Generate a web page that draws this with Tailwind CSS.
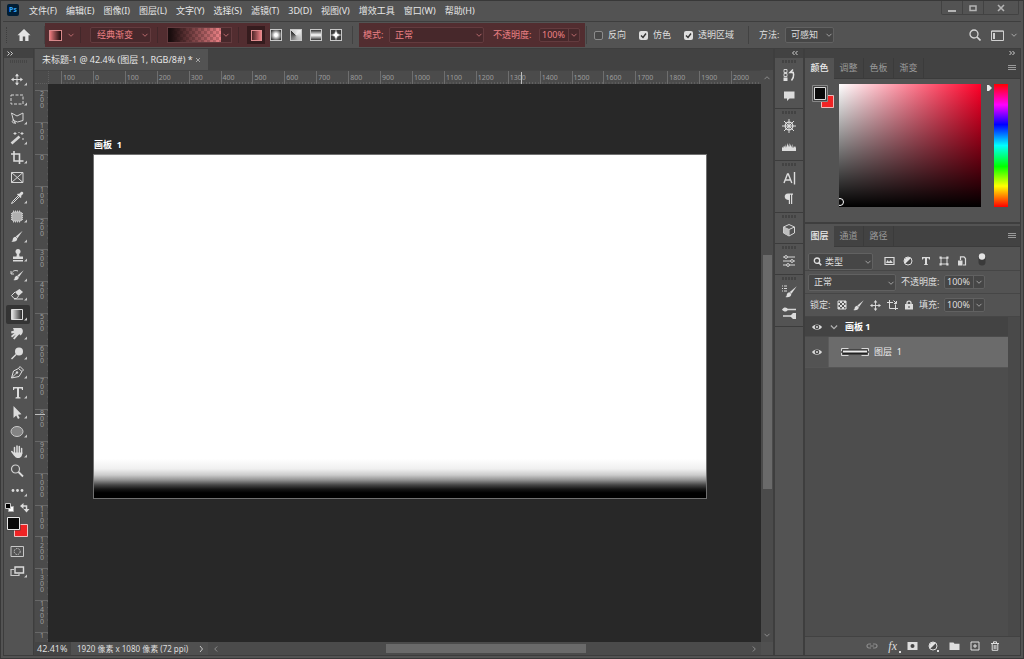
<!DOCTYPE html>
<html lang="zh-CN">
<head>
<meta charset="utf-8">
<title>未标题-1 @ 42.4%</title>
<script src="https://cdn.jsdelivr.net/npm/@tailwindcss/browser@4"></script>
</head>
<body class="bg-[#535353]">
<svg class="hidden">
  <symbol id="fly" viewBox="0 0 24 19"><path d="M21 12.500v3h-3z" fill="#c8c8c8"/></symbol>
  <symbol id="chev" viewBox="0 0 8 8"><path d="M1.500 2.800 4 5.300 6.500 2.800" fill="none" stroke="currentColor"/></symbol>
  <symbol id="eye" viewBox="0 0 12 10"><path d="M1 5C3 1.500 9 1.500 11 5 9 8.500 3 8.500 1 5z" fill="#dcdcdc"/><circle cx="6" cy="5" r="2.300" fill="#484848"/><circle cx="6" cy="5" r="1" fill="#dcdcdc"/></symbol>
  <symbol id="brush" viewBox="0 0 12 12"><path d="M11.700.3 4.800 6 6.500 7.700z" fill="#dcdcdc"/><path d="M4.500 6.200 6.300 8c0 2.700-2.800 3.700-6 3 1.700-.8 1.300-1.500 1.500-2.500s1.300-2.300 2.700-2.300z" fill="#dcdcdc"/></symbol>
  <symbol id="move" viewBox="0 0 12 12"><path d="M6 1v10M1 6h10" stroke="#dcdcdc" fill="none"/><path d="M6 0 8 2.700H4zM6 12l2-2.700H4zM0 6l2.700-2v4zM12 6 9.300 4v4z" fill="#dcdcdc"/></symbol>
  <symbol id="adj" viewBox="0 0 10 10"><circle cx="5" cy="5" r="4" fill="#4a4a4a" stroke="#dcdcdc"/><path d="M2.200 7.800A4 4 0 0 1 7.800 2.200z" fill="#e2e2e2"/></symbol>
</svg>
<div class="flex h-screen flex-col overflow-hidden border border-[#383838] bg-[#535353] px-[2px] pb-[2px] font-['Noto_Sans','Noto_Sans_CJK_SC',sans-serif] text-[9px] leading-3 text-[#dedede]">

  <!-- menu bar -->
  <header class="flex h-[21px] shrink-0 items-start border-b border-[#3e3e3e]">
    <div class="mt-[3px] ml-1 flex h-3 w-3 items-center justify-center rounded-xs bg-[#001e36] text-[7px] font-bold text-[#31a8ff]">Ps</div>
    <nav class="mt-1 ml-[10px] flex flex-1 gap-[9px] text-[#e6e6e6]">
      <button>文件(F)</button><button>编辑(E)</button><button>图像(I)</button><button>图层(L)</button><button>文字(Y)</button><button>选择(S)</button><button>滤镜(T)</button><button>3D(D)</button><button>视图(V)</button><button>增效工具</button><button>窗口(W)</button><button>帮助(H)</button>
    </nav>
    <div class="mr-[2px] flex h-[14px] divide-x divide-[#424242] rounded-b-xs border-x border-b border-[#424242]">
      <button aria-label="最小化" class="flex w-[21px] items-center justify-center"><svg class="h-3 w-3" viewBox="0 0 12 12"><path d="M2 9h8" stroke="#b4b4b4" stroke-width="2"/></svg></button>
      <button aria-label="最大化" class="flex w-[21px] items-center justify-center"><svg class="h-3 w-3" viewBox="0 0 12 12"><path d="M3 4h6v4.500H3z" fill="none" stroke="#b4b4b4" stroke-width="1.500"/></svg></button>
      <button aria-label="关闭" class="flex w-[34px] items-center justify-center"><svg class="h-3 w-3" viewBox="0 0 12 12"><path d="m3 3 6 6M9 3 3 9" stroke="#b4b4b4" stroke-width="1.600"/></svg></button>
    </div>
  </header>

  <!-- options bar -->
  <section class="flex h-[27px] shrink-0 items-center border-b border-[#3e3e3e] pl-[3px]">
    <div class="h-4 w-1 border-l border-dotted border-[#3e3e3e]"></div>
    <button aria-label="主页" class="ml-[6px]"><svg class="h-4 w-4" viewBox="0 0 16 16"><path d="M8 2 1.500 8.200H3.500V14h3.300V9.500h2.400V14h3.300V8.200h2z" fill="#e4e4e4"/></svg></button>
    <div class="ml-3 h-[18px] w-px bg-[#464646]"></div>
    <div class="flex h-6 w-[225px] shrink-0 items-center bg-[#522d30] text-[#ec8084]">
      <button aria-label="渐变工具预设" class="ml-1 flex items-center gap-[5px]"><span class="h-[11px] w-[13px] border border-[#d8898b] bg-linear-to-r from-[#ea7a7d] to-[#1c0c0d]"></span><svg class="h-2 w-2 text-[#b8686b]"><use href="#chev"/></svg></button>
      <div class="ml-[5px] h-4 w-px bg-[#42272a]"></div>
      <div class="relative ml-[9px] w-[61px]">
        <select aria-label="渐变类型" class="block h-4 w-full appearance-none rounded-xs border border-[#633b3e] bg-[#47282b] pl-[6px] leading-3 outline-none"><option>经典渐变</option></select>
        <svg class="pointer-events-none absolute top-1 right-[2px] h-2 w-2 text-[#b8686b]"><use href="#chev"/></svg>
      </div>
      <div class="ml-[6px] h-4 w-px bg-[#42272a]"></div>
      <button aria-label="编辑渐变" class="ml-[9px] flex h-4 w-[65px] items-center border border-[#633b3e] bg-[#47282b]"><span class="h-[14px] flex-1 bg-[linear-gradient(to_right,#1a0d0e_5%,#1a0d0e00),repeating-conic-gradient(#c66c70_0_25%,#ef8387_0_50%)] bg-[length:100%_100%,6px_6px]"></span><svg class="mx-px h-2 w-2 text-[#b8686b]"><use href="#chev"/></svg></button>
      <div class="ml-[6px] h-4 w-px bg-[#42272a]"></div>
      <button aria-label="线性渐变" class="ml-2 flex h-[18px] w-[18px] items-center justify-center bg-[#351c1e]"><span class="h-[11px] w-[11px] border border-[#e08c8f] bg-linear-to-r from-[#4c2527] to-[#f08085]"></span></button>
    </div>
    <div class="flex shrink-0 gap-2">
      <button aria-label="径向渐变" class="h-[12px] w-[12px] border border-[#c8c8c8] bg-[radial-gradient(circle,#ffffff_20%,#3c3c3c_85%)]"></button>
      <button aria-label="角度渐变" class="h-[12px] w-[12px] border border-[#c8c8c8] bg-[conic-gradient(from_310deg,#cccccc,#ededed_25%,#b4b4b4_60%,#333333)]"></button>
      <button aria-label="对称渐变" class="h-[12px] w-[12px] border border-[#c8c8c8] bg-[linear-gradient(to_bottom,#333333,#ffffff_50%,#333333)]"></button>
      <button aria-label="菱形渐变" class="flex h-[12px] w-[12px] items-center justify-center border border-[#c8c8c8] bg-[#3c3c3c]"><svg class="h-[10px] w-[10px]" viewBox="0 0 10 10"><path d="M5 0 6.500 3.500 10 5 6.500 6.500 5 10 3.500 6.500 0 5 3.500 3.500z" fill="#fff" stroke="#8a8a8a" stroke-width=".7"/></svg></button>
    </div>
    <div class="ml-[10px] h-[18px] w-px bg-[#424242]"></div>
    <div class="ml-[6px] flex h-6 w-[226px] shrink-0 items-center bg-[#522d30] text-[#ec8084]">
      <label for="mode" class="ml-1 w-[26px]">模式:</label>
      <div class="relative w-[95px]">
        <select id="mode" class="block h-4 w-full appearance-none rounded-xs border border-[#633b3e] bg-[#47282b] pl-[5px] leading-3 outline-none"><option>正常</option></select>
        <svg class="pointer-events-none absolute top-1 right-px h-2 w-2 text-[#b8686b]"><use href="#chev"/></svg>
      </div>
      <label for="op1" class="ml-[9px] w-[46px] whitespace-nowrap">不透明度:</label>
      <div class="flex h-[14px] items-center rounded-xs border border-[#633b3e] bg-[#47282b]"><input id="op1" value="100%" class="h-3 w-7 pl-[2px] outline-none"><button aria-label="不透明度滑块" class="flex h-3 w-[11px] items-center justify-center border-l border-[#633b3e] text-[#b8686b]"><svg class="h-2 w-2"><use href="#chev"/></svg></button></div>
    </div>
    <div class="ml-px h-[18px] w-px bg-[#424242]"></div>
    <label class="ml-[7px] flex items-center gap-[5px] whitespace-nowrap"><input type="checkbox" class="h-[9px] w-[9px] appearance-none rounded-xs border border-[#8b8b8b] bg-[#484848]">反向</label>
    <label class="ml-[13px] flex items-center gap-[5px] whitespace-nowrap"><span class="relative flex"><input type="checkbox" checked class="h-[9px] w-[9px] appearance-none rounded-xs bg-[#dedede]"><svg class="pointer-events-none absolute inset-0 h-[9px] w-[9px]" viewBox="0 0 9 9"><path d="m2 4.500 2 2L7 2.500" fill="none" stroke="#333" stroke-width="1.400"/></svg></span>仿色</label>
    <label class="ml-[13px] flex items-center gap-[5px] whitespace-nowrap"><span class="relative flex"><input type="checkbox" checked class="h-[9px] w-[9px] appearance-none rounded-xs bg-[#dedede]"><svg class="pointer-events-none absolute inset-0 h-[9px] w-[9px]" viewBox="0 0 9 9"><path d="m2 4.500 2 2L7 2.500" fill="none" stroke="#333" stroke-width="1.400"/></svg></span>透明区域</label>
    <div class="ml-[14px] h-[18px] w-px bg-[#424242]"></div>
    <label for="method" class="ml-[10px] w-[26px] whitespace-nowrap">方法:</label>
    <div class="relative w-[49px]">
      <select id="method" class="block h-4 w-full appearance-none rounded-xs border border-[#616161] bg-[#464646] pl-[5px] leading-3 outline-none"><option>可感知</option></select>
      <svg class="pointer-events-none absolute top-1 right-px h-2 w-2 text-[#a0a0a0]"><use href="#chev"/></svg>
    </div>
    <div class="flex-1"></div>
    <button aria-label="搜索"><svg class="h-3 w-3" viewBox="0 0 12 12"><circle cx="5" cy="5" r="4" fill="none" stroke="#d6d6d6" stroke-width="1.300"/><path d="m8 8 3.500 3.500" stroke="#d6d6d6" stroke-width="1.700"/></svg></button>
    <button aria-label="工作区" class="mr-[3px] ml-[10px] flex items-center gap-[6px]"><svg class="h-[11px] w-[13px]" viewBox="0 0 13 11"><path d="M.5 1h12v9.500H.5z" fill="none" stroke="#d0d0d0"/><path d="M.5 1.200h12" stroke="#d0d0d0"/><path d="M2 3h2v6H2z" fill="#d0d0d0"/></svg><svg class="h-2 w-2 text-[#a8a8a8]"><use href="#chev"/></svg></button>
  </section>

  <div class="flex min-h-0 flex-1 border-x border-b border-[#3c3c3c]">

    <!-- tools -->
    <aside class="flex w-[30px] shrink-0 flex-col border-r border-[#3e3e3e]">
      <div class="h-[9px] bg-[#424242]"><svg class="ml-[2px] h-2 w-2" viewBox="0 0 8 8"><path d="m1.500 2.500 2 2-2 2M4.500 2.500l2 2-2 2" fill="none" stroke="#d0d0d0"/></svg></div>
      <div class="mx-[6px] mt-[2px] h-[3px] bg-[repeating-linear-gradient(to_right,#464646_0_1px,transparent_1px_2px)]"></div>
      <div class="mt-[7px] ml-[2px] grid h-[430px] w-6 shrink-0 grid-rows-22">
        <button aria-label="移动工具"><svg class="h-[19px] w-6" viewBox="0 0 24 19"><use href="#move" x="5" y="3.500" width="12" height="12"/><use href="#fly"/></svg></button>
        <button aria-label="矩形选框工具"><svg class="h-[19px] w-6" viewBox="0 0 24 19"><path d="M5 5h12v9H5z" fill="none" stroke="#d6d6d6" stroke-dasharray="3 1.500"/><use href="#fly"/></svg></button>
        <button aria-label="套索工具"><svg class="h-[19px] w-6" viewBox="0 0 24 19"><path d="m5.500 4 5.500 3 6-3v7.500l-5.500 1.500-4-1.500L5.500 4M7.500 11.500c-2 0-1.500 2.500.5 2.500l1.500-.5M7 10l2.500 5" fill="none" stroke="#d6d6d6"/><use href="#fly"/></svg></button>
        <button aria-label="魔棒工具"><svg class="h-[19px] w-6" viewBox="0 0 24 19"><path d="m5.500 14.500 8-7" stroke="#d6d6d6" stroke-width="2.600"/><path d="M9 3v3M7.500 4.500h3M16 3v3M14.500 4.500h3M17 9v2M13 3v1" stroke="#d6d6d6"/><use href="#fly"/></svg></button>
        <button aria-label="裁剪工具"><svg class="h-[19px] w-6" viewBox="0 0 24 19"><path d="M8 3v10h7M5 6h8.500v3M13.500 9v7M15 13h2.500" fill="none" stroke="#dcdcdc" stroke-width="1.600"/><use href="#fly"/></svg></button>
        <button aria-label="图框工具"><svg class="h-[19px] w-6" viewBox="0 0 24 19"><path d="M5.500 4.500h11.500v10H5.500zM5.500 4.500l11.500 10M17 4.500l-11.500 10" fill="none" stroke="#d6d6d6"/></svg></button>
        <button aria-label="吸管工具"><svg class="h-[19px] w-6" viewBox="0 0 24 19"><path d="m12.500 7.500-6 6-1 2 2-1 6-6" fill="none" stroke="#dcdcdc"/><path d="m11 6.500 1-1 1 .5 2-2c1.500-1 3 .5 2 2l-2 2 .5 1-1 1z" fill="#dcdcdc"/><use href="#fly"/></svg></button>
        <button aria-label="修补工具"><svg class="h-[19px] w-6" viewBox="0 0 24 19"><path d="M7.500 3.500v12M9.500 3.500v12M11.500 3.500v12M13.500 3.500v12M5 6.500h12M5 8.500h12M5 10.500h12M5 12.500h12" stroke="#c8c8c8"/><rect x="6" y="5" width="10" height="9" rx="2" fill="#b0b0b0" stroke="#cfcfcf" stroke-width=".8"/><use href="#fly"/></svg></button>
        <button aria-label="画笔工具"><svg class="h-[19px] w-6" viewBox="0 0 24 19"><use href="#brush" x="5" y="3.500" width="12" height="12"/><use href="#fly"/></svg></button>
        <button aria-label="图章工具"><svg class="h-[19px] w-6" viewBox="0 0 24 19"><circle cx="12" cy="5.500" r="2.500" fill="#dcdcdc"/><path d="M11 7h2l.5 3.500H17V13H7v-2.500h3.500zM7 14h10v1.500H7z" fill="#dcdcdc"/><use href="#fly"/></svg></button>
        <button aria-label="历史记录画笔"><svg class="h-[19px] w-6" viewBox="0 0 24 19"><use href="#brush" x="7" y="3.500" width="11" height="12"/><path d="M5 5v3h3M5.500 7.500C7 4.500 9 4 12 5" fill="none" stroke="#d6d6d6"/><use href="#fly"/></svg></button>
        <button aria-label="橡皮擦工具"><svg class="h-[19px] w-6" viewBox="0 0 24 19"><path d="m9 7 4.500-3L17 7l-4.500 4z" fill="#dcdcdc"/><path d="m9 7-3.500 3.500 2.500 3h2.500l2-2.500M8 14h9" fill="none" stroke="#dcdcdc"/><use href="#fly"/></svg></button>
        <button aria-label="渐变工具" aria-pressed="true" class="rounded-xs bg-[#343434]"><svg class="h-[19px] w-6" viewBox="0 0 24 19"><defs><linearGradient id="gr"><stop stop-color="#eee"/><stop offset="1" stop-color="#222"/></linearGradient></defs><path d="M5.500 4.500h11v10h-11z" fill="url(#gr)" stroke="#dcdcdc"/><use href="#fly"/></svg></button>
        <button aria-label="涂抹工具"><svg class="h-[19px] w-6" viewBox="0 0 24 19"><path d="M7 4h8c2.500 1 2.500 5 0 7l-1 .5-.5-1.500-2 2-3 3.500-1.500-1 3-4-4 3-1-1.500 3.500-3-3 .5-.5-2 3-1z" fill="#dcdcdc"/><use href="#fly"/></svg></button>
        <button aria-label="减淡工具"><svg class="h-[19px] w-6" viewBox="0 0 24 19"><circle cx="13" cy="7.500" r="4" fill="#dcdcdc"/><path d="m10 10.500-4.500 4.500" stroke="#dcdcdc" stroke-width="1.500"/><use href="#fly"/></svg></button>
        <button aria-label="钢笔工具"><svg class="h-[19px] w-6" viewBox="0 0 24 19"><path d="m5.500 15 2-7 5-2.500 3.500 3-3 5zM5.500 15l5-5M12.500 5.500l1.500-2 3.500 3.500-1.500 1.500" fill="none" stroke="#dcdcdc"/><circle cx="11" cy="9.500" r="1.200" fill="#dcdcdc"/><use href="#fly"/></svg></button>
        <button aria-label="文字工具"><svg class="h-[19px] w-6" viewBox="0 0 24 19"><path d="M7 4h10v3h-1l-.5-1.500H13V14l1.500.5v1h-5v-1L11 14V5.500H8.500L8 7H7z" fill="#dcdcdc"/><use href="#fly"/></svg></button>
        <button aria-label="路径选择工具"><svg class="h-[19px] w-6" viewBox="0 0 24 19"><path d="M7.500 3v12l2.700-2.500 1.800 3.500 1.700-1-1.700-3.300 3.500-.5z" fill="#dcdcdc"/><use href="#fly"/></svg></button>
        <button aria-label="椭圆工具"><svg class="h-[19px] w-6" viewBox="0 0 24 19"><ellipse cx="11" cy="9.500" rx="6" ry="5" fill="#838383" stroke="#c8c8c8"/><use href="#fly"/></svg></button>
        <button aria-label="抓手工具"><svg class="h-[19px] w-6" viewBox="0 0 24 19"><path d="M8.500 12V5.500M11 11V4M13.300 11V4.500M15.600 11.500V6.500M5.800 9.500l2.700 3.500" stroke="#dcdcdc" stroke-width="1.500" stroke-linecap="round"/><path d="M7.800 10.500h8.500c0 3-1 5.500-4 5.500s-3.500-1.500-4.500-3z" fill="#dcdcdc"/><use href="#fly"/></svg></button>
        <button aria-label="缩放工具"><svg class="h-[19px] w-6" viewBox="0 0 24 19"><circle cx="9.500" cy="8" r="4" fill="none" stroke="#d0d0d0" stroke-width="1.200"/><path d="m12.500 11 4.500 4.500" stroke="#dcdcdc" stroke-width="1.800"/></svg></button>
        <button aria-label="编辑工具栏"><svg class="h-[19px] w-6" viewBox="0 0 24 19"><g fill="#dcdcdc"><circle cx="7" cy="9.500" r="1.400"/><circle cx="11.500" cy="9.500" r="1.400"/><circle cx="16" cy="9.500" r="1.400"/></g><use href="#fly"/></svg></button>
      </div>
      <svg class="mt-[2px] h-[38px] w-7 shrink-0" viewBox="0 0 28 38"><path d="M4.500 4.500h5v5h-5z" fill="#fff" stroke="#aaa"/><path d="M1.500 1.500h5v5h-5z" fill="#000" stroke="#c8c8c8"/><path d="M18.500 4h4v4" fill="none" stroke="#dcdcdc" stroke-width="1.500"/><path d="m16 4 3.500-3v6zM22.500 10.500l-3-3.500h6z" fill="#dcdcdc"/><path d="M10.500 22.500h13v12h-13z" fill="#f12324" stroke="#f0c0c0"/><path d="M2.500 14.500h14v14h-14z" fill="#444"/><path d="M3.500 15.500h12v12h-12z" fill="#090909" stroke="#e8e8e8"/></svg>
      <button aria-label="快速蒙版" class="mt-px ml-[2px] h-5 w-6"><svg class="h-[19px] w-6" viewBox="0 0 24 19"><path d="M5 4.500h12.500v10H5z" fill="none" stroke="#c8c8c8"/><circle cx="11.200" cy="9.500" r="3" fill="none" stroke="#c8c8c8" stroke-dasharray="1.500 1"/></svg></button>
      <button aria-label="屏幕模式" class="ml-[2px] h-5 w-6"><svg class="h-[19px] w-6" viewBox="0 0 24 19"><path d="M9 5h8.500v6H9z" fill="none" stroke="#dcdcdc" stroke-width="1.400"/><path d="M8 7.500H5v6h8V12" fill="none" stroke="#c8c8c8" stroke-width="1.200"/><use href="#fly"/></svg></button>
    </aside>

    <!-- document -->
    <main class="flex min-w-0 flex-1 flex-col border-l border-[#454545] bg-[#424242]">
      <div class="flex h-[21px] shrink-0">
        <div class="flex w-[173px] items-center justify-between bg-[#535353] pr-[6px] pl-[7px] whitespace-nowrap text-[#e6e6e6]"><a href="#canvas">未标题-1 @ 42.4% (图层 1, RGB/8#) *</a><button aria-label="关闭文档"><svg class="h-2 w-2" viewBox="0 0 8 8"><path d="m2 2 4 4M6 2 2 6" stroke="#b0b0b0" stroke-width=".9"/></svg></button></div>
      </div>
      <div class="flex min-h-0 flex-1">
        <div class="flex min-w-0 flex-1 flex-col">
          <div class="flex h-[14px] shrink-0 overflow-hidden border-t border-[#454545] bg-[#4b4b4b]">
            <div class="w-[14px] shrink-0 border-r border-b border-dotted border-[#5e5e5e]"></div>
            <div class="relative ml-[12px] min-w-0 flex-1">
              <div id="hr" class="-mr-[2px] grid h-full grid-cols-22"></div>
              <div class="absolute bottom-0 left-[460px] h-3 w-px bg-[#bdbdbd]"></div>
            </div>
          </div>
          <div class="flex min-h-0 flex-1">
            <div class="relative w-[13px] shrink-0 overflow-hidden bg-[#4b4b4b] pt-[6px]">
              <div id="vr" class="grid h-[574px] grid-rows-18"></div>
              <div class="absolute top-[330px] left-0 h-px w-[10px] bg-[#bdbdbd]"></div>
            </div>
            <div id="canvas" class="min-w-0 flex-1 overflow-hidden bg-[#282828] pr-[54px] pl-[45px]">
              <div class="mt-[55px] h-[15px] pl-px leading-3 font-bold text-white">画板&nbsp; 1</div>
              <div class="aspect-video border border-[#707070] bg-[linear-gradient(to_bottom,#fff_88.5%,#f0f0f0_91.5%,#cbcbcb_93.3%,#909090_94.8%,#454545_96.2%,#161616_97.4%,#000_98.5%)]"></div>
            </div>
          </div>
        </div>
        <div class="flex w-3 shrink-0 flex-col items-center bg-[#4b4b4b]">
          <svg class="mt-1 h-2 w-2 shrink-0 rotate-180 text-[#8c8c8c]"><use href="#chev"/></svg>
          <div class="mt-[173px] h-[234px] w-[9px] shrink-0 bg-[#6a6a6a]"></div>
          <div class="flex-1"></div>
          <svg class="mb-[3px] h-2 w-2 shrink-0 text-[#8c8c8c]"><use href="#chev"/></svg>
        </div>
      </div>
      <footer class="flex h-[13px] shrink-0 items-center bg-[#4b4b4b] whitespace-nowrap">
        <div class="flex h-full w-9 items-center bg-[#444444] pl-[2px]">42.41%</div>
        <div class="flex h-full w-[137px] items-center justify-between bg-[#505050] pr-[2px] pl-[6px] text-[8px]"><span>1920 像素 x 1080 像素 (72 ppi)</span><svg class="h-3 w-2" viewBox="0 0 8 12"><path d="m2 3 2.500 3L2 9" fill="none" stroke="#c8c8c8"/></svg></div>
        <svg class="ml-1 h-2 w-2 rotate-90 text-[#8c8c8c]"><use href="#chev"/></svg>
        <div class="ml-[166px] h-[9px] w-[200px] bg-[#6a6a6a]"></div>
        <div class="flex-1"></div>
        <svg class="h-2 w-2 -rotate-90 text-[#8c8c8c]"><use href="#chev"/></svg>
        <div class="ml-[3px] h-full w-3 bg-[#505050]"></div>
      </footer>
    </main>

    <!-- collapsed panels -->
    <aside class="flex w-8 shrink-0 flex-col border-x-2 border-[#3e3e3e]">
      <div class="flex h-[9px] justify-end bg-[#424242] pr-1"><svg class="h-2 w-2" viewBox="0 0 8 8"><path d="m3.500 2-2 2 2 2M6.500 2l-2 2 2 2" fill="none" stroke="#d0d0d0"/></svg></div>
      <div class="flex flex-col border-b border-[#3c3c3c] pb-[2px]">
        <div class="mx-[7px] mt-[2px] h-[3px] bg-[repeating-linear-gradient(to_right,#434343_0_2px,transparent_2px_3px)]"></div>
        <button aria-label="历史记录" class="mt-px flex h-[21px] items-center justify-center"><svg class="h-[14px] w-[14px]" viewBox="0 0 14 14"><path d="M2 1.500h3v3H2zM2 5.500h3v3H2z" fill="none" stroke="#d0d0d0"/><path d="M1.500 9.500h4V13h-4z" fill="#e0e0e0"/><path d="M11 1.500 8 4.500h4M8.500 4c4-1 4 5 1 8.500" fill="none" stroke="#e0e0e0" stroke-width="1.500"/></svg></button>
        <button aria-label="注释" class="flex h-[21px] items-center justify-center"><svg class="h-[14px] w-[14px]" viewBox="0 0 14 14"><path d="M2 2.500h10.500v7H7.500L5 12V9.500H2z" fill="#dcdcdc"/></svg></button>
      </div>
      <div class="flex flex-col border-b border-[#3c3c3c] pb-[3px]">
        <div class="mx-[7px] mt-[2px] h-[3px] bg-[repeating-linear-gradient(to_right,#434343_0_2px,transparent_2px_3px)]"></div>
        <button aria-label="导航器" class="mt-px flex h-[21px] items-center justify-center"><svg class="h-[14px] w-[14px]" viewBox="0 0 14 14"><circle cx="7" cy="7" r="3.800" fill="none" stroke="#dcdcdc" stroke-width="1.300"/><path d="M7 0v14M0 7h14M2 2l10 10M12 2 2 12" stroke="#dcdcdc"/><circle cx="7" cy="7" r="1.600" fill="#dcdcdc"/></svg></button>
        <button aria-label="直方图" class="flex h-[21px] items-center justify-center"><svg class="h-[14px] w-[14px]" viewBox="0 0 14 14"><path d="M0 11V8l1.500-2v2L3 5.500V8l1-4v3.500L6 3v4l1.500-4v4L9 4v3.500L10.500 4v4l1-2V8L13 6l1 2v3z" fill="#dcdcdc"/></svg></button>
      </div>
      <div class="flex flex-col border-b border-[#3c3c3c] pb-[3px]">
        <div class="mx-[7px] mt-[2px] h-[3px] bg-[repeating-linear-gradient(to_right,#434343_0_2px,transparent_2px_3px)]"></div>
        <button aria-label="字符" class="mt-px flex h-[21px] items-center justify-center"><svg class="h-[14px] w-[14px]" viewBox="0 0 14 14"><path d="m2 12 3.500-9h.8L9.800 12M3.200 9h5.400M12.500 1v12.500" fill="none" stroke="#dcdcdc" stroke-width="1.400"/></svg></button>
        <button aria-label="段落" class="flex h-[21px] items-center justify-center"><svg class="h-[14px] w-[14px]" viewBox="0 0 14 14"><path d="M11 1.500v1.200h-.8V12H9V2.700H8V12H6.800V8C1.500 8 1.500 1.500 6 1.500z" fill="#dcdcdc"/></svg></button>
      </div>
      <div class="flex flex-col border-b border-[#3c3c3c] pb-[3px]">
        <div class="mx-[7px] mt-[2px] h-[3px] bg-[repeating-linear-gradient(to_right,#434343_0_2px,transparent_2px_3px)]"></div>
        <button aria-label="3D" class="mt-px flex h-[21px] items-center justify-center"><svg class="h-[14px] w-[14px]" viewBox="0 0 14 14"><path d="M7 1.500 12.500 4v6L7 13 1.500 10V4zM1.500 4 7 6.500 12.500 4M7 6.500V13" fill="none" stroke="#d6d6d6"/><path d="M1.500 4 7 6.500V13L1.500 10z" fill="#bebebe"/></svg></button>
      </div>
      <div class="flex flex-col border-b border-[#3c3c3c] pb-[3px]">
        <div class="mx-[7px] mt-[2px] h-[3px] bg-[repeating-linear-gradient(to_right,#434343_0_2px,transparent_2px_3px)]"></div>
        <button aria-label="属性" class="mt-px flex h-[21px] items-center justify-center"><svg class="h-[14px] w-[14px]" viewBox="0 0 14 14"><path d="M1 3h12M1 7h12M1 11h12" stroke="#d6d6d6"/><g fill="#535353" stroke="#d6d6d6"><circle cx="4" cy="3" r="1.400"/><circle cx="10" cy="7" r="1.400"/><circle cx="6" cy="11" r="1.400"/></g></svg></button>
      </div>
      <div class="flex flex-col border-b border-[#3c3c3c] pb-[3px]">
        <div class="mx-[7px] mt-[2px] h-[3px] bg-[repeating-linear-gradient(to_right,#434343_0_2px,transparent_2px_3px)]"></div>
        <button aria-label="画笔设置" class="mt-px flex h-[21px] items-center justify-center"><svg class="h-4 w-4" viewBox="0 0 16 16"><path d="M1 2h1M1 4.500h1M1 7h1M3 2h3M3 4.500h3M3 7h3" stroke="#d6d6d6"/><use href="#brush" x="4" y="2" width="12" height="12"/></svg></button>
        <button aria-label="画笔" class="flex h-[21px] items-center justify-center"><svg class="h-4 w-4" viewBox="0 0 16 16"><path d="M6 4.500h9M2 11h8" stroke="#d6d6d6" stroke-width="1.500"/><path d="M1 4.500c2-3 5-2.500 6 0-1 2.500-4 3-6 0zM9 11l3-3h3v6h-3z" fill="#dcdcdc"/></svg></button>
      </div>
    </aside>

    <!-- panels -->
    <aside class="flex w-[215px] shrink-0 flex-col">
      <div class="flex h-[9px] shrink-0 justify-end bg-[#424242] pr-1"><svg class="h-2 w-2" viewBox="0 0 8 8"><path d="m1.500 2 2 2-2 2M4.500 2l2 2-2 2" fill="none" stroke="#d0d0d0"/></svg></div>
      <section class="h-[166px] shrink-0 border-b-2 border-[#3e3e3e]">
        <div class="flex h-[21px] items-stretch bg-[#424242] text-[#9a9a9a]">
          <button class="w-[29px] bg-[#535353] pb-px font-medium text-[#ececec]">颜色</button>
          <button class="w-[30px] border-r border-b border-[#3b3b3b]">调整</button>
          <button class="w-[30px] border-r border-b border-[#3b3b3b]">色板</button>
          <button class="w-[30px] border-r border-b border-[#3b3b3b]">渐变</button>
          <div class="flex flex-1 items-center justify-end border-b border-[#3b3b3b] pr-1"><svg class="h-2 w-2" viewBox="0 0 8 8"><path d="M0 1.500h8M0 3.500h8M0 5.500h8" stroke="#9a9a9a"/></svg></div>
        </div>
        <div class="flex pt-[5px] pr-3 pl-[7px]">
          <svg class="h-6 w-6 shrink-0" viewBox="0 0 24 24"><path d="M9.500 11.500h12v12h-12z" fill="#f12324" stroke="#f0b8b8"/><path d="M.5 1.500h15v16H.5z" fill="#444" stroke="#888"/><path d="M2.500 3.500h11v12h-11z" fill="#090909" stroke="#d8d8d8"/></svg>
          <div class="relative ml-[3px] h-[123px] flex-1 overflow-hidden bg-[linear-gradient(to_top,#000,transparent),linear-gradient(to_right,#fff,#ff0028)]"><div class="absolute bottom-px -left-[3px] h-2 w-2 rounded-full border border-white"></div></div>
          <svg class="mt-px ml-[5px] h-[6px] w-[6px] shrink-0" viewBox="0 0 6 6"><path d="M1 0h2l3 3-3 3H1z" fill="#e8e8e8"/></svg>
          <div class="ml-[2px] h-[123px] w-[14px] shrink-0 bg-[linear-gradient(to_bottom,#f00,#f0f_17%,#00f_33%,#0ff_50%,#0f0_67%,#ff0_83%,#f00)]"></div>
        </div>
      </section>
      <section class="flex min-h-0 flex-1 flex-col pt-[2px]">
        <div class="flex h-[21px] shrink-0 items-stretch bg-[#424242] text-[#9a9a9a]">
          <button class="w-[29px] bg-[#535353] pb-[2px] font-medium text-[#ececec]">图层</button>
          <button class="w-[30px] border-r border-b border-[#3b3b3b] pb-px">通道</button>
          <button class="w-[30px] border-r border-b border-[#3b3b3b] pb-px">路径</button>
          <div class="flex flex-1 items-center justify-end border-b border-[#3b3b3b] pr-1"><svg class="h-2 w-2" viewBox="0 0 8 8"><path d="M0 1.500h8M0 3.500h8M0 5.500h8" stroke="#9a9a9a"/></svg></div>
        </div>
        <div class="flex h-6 shrink-0 items-end border-b border-[#464646]">
          <div class="relative ml-[3px] w-[65px]">
            <select aria-label="图层过滤" class="block h-[17px] w-full appearance-none rounded-xs border border-[#616161] bg-[#464646] pl-4 leading-3 outline-none"><option>类型</option></select>
            <svg class="pointer-events-none absolute top-1 left-[5px] h-[9px] w-[9px]" viewBox="0 0 9 9"><circle cx="4" cy="3.700" r="2.700" fill="none" stroke="#e0e0e0" stroke-width="1.300"/><path d="m6 5.700 2.200 2.500" stroke="#e0e0e0" stroke-width="1.600"/></svg>
            <svg class="pointer-events-none absolute top-[5px] right-px h-2 w-2 text-[#a0a0a0]"><use href="#chev"/></svg>
          </div>
          <div class="mb-1 ml-[11px] flex items-end gap-2">
            <button aria-label="像素图层"><svg class="h-[10px] w-[11px]" viewBox="0 0 11 10"><path d="M1 1.500h9v7H1z" fill="none" stroke="#dcdcdc" stroke-width="1.200"/><path d="m2 7 1.500-3L5 6l1.500-2L9 7z" fill="#dcdcdc"/></svg></button>
            <button aria-label="调整图层"><svg class="h-[10px] w-[10px]"><use href="#adj"/></svg></button>
            <button aria-label="文字图层"><svg class="h-[10px] w-[10px]" viewBox="0 0 10 10"><path d="M1 1h8v2.500H8L7.500 2.200H6V8l1 .4V9H3v-.6L4 8V2.200H2.500L2 3.500H1z" fill="#dcdcdc"/></svg></button>
            <button aria-label="形状图层"><svg class="h-[10px] w-[10px]" viewBox="0 0 10 10"><path d="M2 2h6v6H2z" fill="none" stroke="#dcdcdc"/><path d="M.5.5h2.200v2.200H.5zM7.300.5h2.200v2.200H7.300zM.5 7.300h2.200v2.200H.5zM7.300 7.300h2.200v2.200H7.300z" fill="#dcdcdc"/></svg></button>
            <button aria-label="智能对象"><svg class="h-[10px] w-[10px]" viewBox="0 0 10 10"><path d="M3.500 4V.8H7L8.500 2.500V9H6" fill="none" stroke="#dcdcdc" stroke-width="1.200"/><path d="M1 4.500h4.500v5H1z" fill="#dcdcdc"/></svg></button>
            <button aria-label="过滤开关" class="ml-[3px]"><svg class="h-[13px] w-[8px]" viewBox="0 0 8 13"><rect x=".5" y=".5" width="7" height="12" rx="3.500" fill="#3a3a3a"/><circle cx="4" cy="3.500" r="3.200" fill="#e4e4e4"/></svg></button>
          </div>
        </div>
        <div class="flex h-[23px] shrink-0 items-center border-b border-[#464646]">
          <div class="relative ml-[3px] w-[88px]">
            <select aria-label="混合模式" class="block h-[17px] w-full appearance-none rounded-xs border border-[#616161] bg-[#464646] pl-[5px] leading-3 outline-none"><option>正常</option></select>
            <svg class="pointer-events-none absolute top-[5px] right-px h-2 w-2 text-[#a0a0a0]"><use href="#chev"/></svg>
          </div>
          <label for="op2" class="ml-[5px] w-[43px] whitespace-nowrap">不透明度:</label>
          <div class="flex h-[14px] items-center rounded-xs border border-[#616161] bg-[#464646]"><input id="op2" value="100%" class="h-3 w-7 pl-[2px] outline-none"><button aria-label="不透明度滑块" class="flex h-3 w-[11px] items-center justify-center border-l border-[#616161] text-[#a0a0a0]"><svg class="h-2 w-2"><use href="#chev"/></svg></button></div>
        </div>
        <div class="flex h-[23px] shrink-0 items-center border-b border-[#464646]">
          <span class="ml-[5px] w-[27px] whitespace-nowrap">锁定:</span>
          <div class="flex w-[82px] items-center gap-[6px]">
            <button aria-label="锁定透明像素"><svg class="h-[10px] w-[10px]" viewBox="0 0 10 10"><path d="M1 1h8v8H1z" fill="none" stroke="#dcdcdc"/><path d="M3 1h2v2H3zM7 1h2v2H7zM1 3h2v2H1zM5 3h2v2H5zM3 5h2v2H3zM7 5h2v2H7zM1 7h2v2H1zM5 7h2v2H5z" fill="#dcdcdc"/></svg></button>
            <button aria-label="锁定图像像素"><svg class="h-[11px] w-[11px]"><use href="#brush"/></svg></button>
            <button aria-label="锁定位置"><svg class="h-[11px] w-[11px]"><use href="#move"/></svg></button>
            <button aria-label="防止自动嵌套"><svg class="h-[10px] w-[11px]" viewBox="0 0 11 10"><path d="M2.500 0v8.500M0 2.500h6M2.500 8.500H11M8.500 4.500V10M6.500.5l3 3M9.500 1v2.500H7" fill="none" stroke="#dcdcdc"/></svg></button>
            <button aria-label="锁定全部"><svg class="h-[10px] w-[10px]" viewBox="0 0 10 10"><path d="M3 5V3c0-2.500 4-2.500 4 0v2" fill="none" stroke="#dcdcdc" stroke-width="1.300"/><path d="M1 4h8v5.500H1z" fill="#dcdcdc"/><path d="M4.500 6h1v2h-1z" fill="#444"/></svg></button>
          </div>
          <label for="fill" class="w-[25px] whitespace-nowrap">填充:</label>
          <div class="flex h-[14px] items-center rounded-xs border border-[#616161] bg-[#464646]"><input id="fill" value="100%" class="h-3 w-7 pl-[2px] outline-none"><button aria-label="填充滑块" class="flex h-3 w-[11px] items-center justify-center border-l border-[#616161] text-[#a0a0a0]"><svg class="h-2 w-2"><use href="#chev"/></svg></button></div>
        </div>
        <div class="flex min-h-0 flex-1 border-b border-[#424242] bg-[#494949]">
          <div class="flex-1 bg-[#4d4d4d]">
            <div class="flex h-5 items-center border-b border-[#4b4b4b] bg-[#434343]">
              <button aria-label="显示画板" class="ml-[6px]"><svg class="h-[10px] w-3"><use href="#eye"/></svg></button>
              <button aria-label="展开画板" class="ml-[6px]"><svg class="h-[10px] w-[10px] text-[#b0b0b0]"><use href="#chev"/></svg></button>
              <span class="ml-[6px] font-bold text-white">画板 1</span>
            </div>
            <div class="flex h-[31px] border-b border-[#555555] bg-[#6b6b6b]">
              <button aria-label="显示图层" class="flex w-[24px] items-center border-r border-[#5c5c5c] bg-[#535353] pl-[6px]"><svg class="h-[10px] w-3"><use href="#eye"/></svg></button>
              <div class="flex flex-1 items-center"><svg class="ml-3 h-2 w-7" viewBox="0 0 28 8"><path d="M.5 3V.5h7M20.500.5h7V3M.5 5v2.500h7M20.500 7.500h7V5" fill="none" stroke="#d8d8d8"/><path d="M1.500 1.500h25v5h-25z" fill="#222"/><path d="M2 3.500h24" stroke="#ededed" stroke-width="2"/></svg><span class="ml-[5px] text-[#ececec]">图层&nbsp; 1</span></div>
            </div>
          </div>
          <div class="w-3 shrink-0"></div>
        </div>
        <div class="flex h-[18px] shrink-0 items-center justify-end gap-[10px] pr-5">
          <button aria-label="链接图层"><svg class="h-[10px] w-[12px]" viewBox="0 0 12 10"><path d="M5 3H3a2 2 0 0 0 0 4h2M7 3h2a2 2 0 0 1 0 4H7M4 5h4" fill="none" stroke="#8c8c8c" stroke-width="1.200"/></svg></button>
          <button aria-label="图层样式" class="relative font-['Liberation_Serif',serif] text-xs leading-3 text-[#dedede] italic">fx<span class="absolute -right-1 -bottom-px h-[2px] w-[2px] bg-[#dedede]"></span></button>
          <button aria-label="图层蒙版"><svg class="h-[10px] w-[11px]" viewBox="0 0 11 10"><path d="M.5 1h10v8H.5z" fill="#dedede"/><circle cx="5.500" cy="5" r="2" fill="#444"/></svg></button>
          <button aria-label="新建调整图层"><svg class="h-[11px] w-[11px]" viewBox="0 0 11 11"><use href="#adj" width="10" height="10"/><path d="M9 9h2v2H9z" fill="#dedede"/></svg></button>
          <button aria-label="新建组"><svg class="h-[10px] w-[11px]" viewBox="0 0 11 10"><path d="M.5 1.500h4l1 1.300h5V9H.5z" fill="#dedede"/></svg></button>
          <button aria-label="新建图层"><svg class="h-[10px] w-[10px]" viewBox="0 0 10 10"><path d="M1 1h8v8H1zM5 3v4M3 5h4" fill="none" stroke="#dedede"/></svg></button>
          <button aria-label="删除图层"><svg class="h-[10px] w-[10px]" viewBox="0 0 10 10"><path d="M1 2.500h8M3.500 2V.8h3V2M2.200 3v6.300h5.600V3M4.200 4v4M5.900 4v4" fill="none" stroke="#dedede"/></svg></button>
        </div>
      </section>
    </aside>
  </div>
</div>
<script>
  // Ruler cells: one per 100 document pixels
  const hr = document.getElementById('hr');
  for (let i = -1; i < 21; i++) {
    hr.insertAdjacentHTML('beforeend', `<div class="overflow-hidden border-l border-[#6e6e6e] bg-[linear-gradient(to_right,#636363_1px,transparent_1px)] bg-[length:10%_2px] bg-bottom bg-repeat-x pt-[3px] pl-px text-[7px] leading-2 text-[#9c9c9c]">${Math.abs(i) * 100}</div>`);
  }
  const vr = document.getElementById('vr');
  for (let i = -2; i < 16; i++) {
    // The last mark only has room for its first digit
    const label = i === 15 ? '1' : String(Math.abs(i) * 100);
    vr.insertAdjacentHTML('beforeend', `<div class="overflow-hidden border-t border-[#686868] bg-[linear-gradient(to_bottom,#636363_1px,transparent_1px)] bg-[length:1px_20%] bg-right bg-repeat-y pl-[5px] text-[7px] leading-[6px] text-[#9c9c9c]">${label.split('').join('<br>')}</div>`);
  }
</script>
</body>
</html>
